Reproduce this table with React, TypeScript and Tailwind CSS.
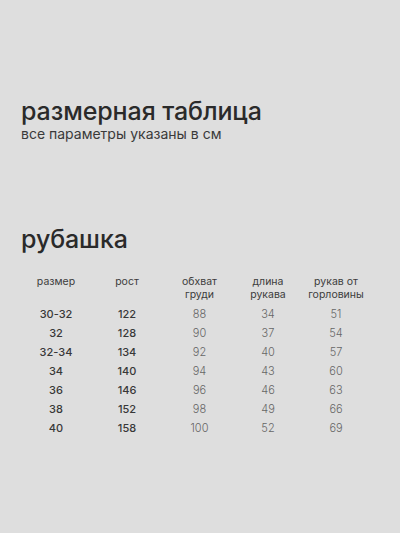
const rows = [
  ["30-32", "122", "88", "34", "51"],
  ["32", "128", "90", "37", "54"],
  ["32-34", "134", "92", "40", "57"],
  ["34", "140", "94", "43", "60"],
  ["36", "146", "96", "46", "63"],
  ["38", "152", "98", "49", "66"],
  ["40", "158", "100", "52", "69"],
];

const headers = [
  ["размер"],
  ["рост"],
  ["обхват", "груди"],
  ["длина", "рукава"],
  ["рукав от", "горловины"],
];

export default function App() {
  return (
    <div
      className="h-[533px] w-[400px] bg-[#dedede] px-[21px] pt-[97px] text-[#2a2a2a]"
      style={{ fontFamily: "Inter, 'Noto Sans', sans-serif" }}
    >
      {/* Heading */}
      <h1 className="text-[25px] font-medium leading-[28px] tracking-[-0.1px]">
        размерная таблица
      </h1>
      <p className="mt-[1px] text-[14px] leading-[16px] text-[#3a3a3a]">
        все параметры указаны в см
      </p>

      <h2 className="mt-[83px] text-[25px] font-medium leading-[28px] tracking-[-0.1px]">
        рубашка
      </h2>

      {/* Table */}
      <div className="mt-[22px] grid grid-cols-[70px_72px_73px_64px_72px] text-center text-[10.5px]">
        {headers.map((h, i) => (
          <div key={i} className="leading-[13px] text-[#3c3c3c]">
            {h.map((line) => (
              <div key={line}>{line}</div>
            ))}
          </div>
        ))}
      </div>

      <div className="mt-[4px] flex flex-col">
        {rows.map((r, i) => (
          <div
            key={i}
            className="grid h-[19px] grid-cols-[70px_72px_73px_64px_72px] items-center text-center text-[11px]"
          >
            <div className="font-medium text-[#383838]">{r[0]}</div>
            <div className="font-medium text-[#383838]">{r[1]}</div>
            <div className="font-light text-[#666]">{r[2]}</div>
            <div className="font-light text-[#666]">{r[3]}</div>
            <div className="font-light text-[#666]">{r[4]}</div>
          </div>
        ))}
      </div>
    </div>
  );
}
